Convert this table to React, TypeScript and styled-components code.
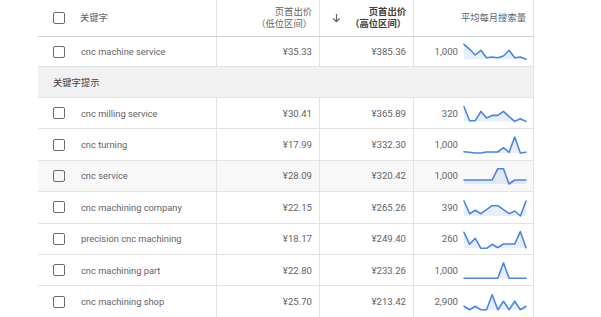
import React from "react";
import styled, { createGlobalStyle } from "styled-components";

const Global = createGlobalStyle`
  html, body { margin: 0; padding: 0; background: #fff; }
  body { font-family: Roboto, "Noto Sans CJK SC", sans-serif; }
`;

const COLS = "178px 103px 94px 120px";
const FONT = `Roboto, "Noto Sans CJK SC", sans-serif`;

const Page = styled.div`
  width: 601px;
  height: 317px;
  overflow: hidden;
  padding-left: 38px;
  box-sizing: border-box;
`;

const Table = styled.div`
  width: 496px;
  border-right: 1px solid #e3e3e3;
  box-sizing: border-box;
  font-family: ${FONT};
`;

const Row = styled.div<{ $h: number; $bg?: string; $strong?: boolean }>`
  display: grid;
  grid-template-columns: ${COLS};
  height: ${(p) => p.$h}px;
  box-sizing: border-box;
  background: ${(p) => p.$bg || "#fff"};
  border-bottom: 1px solid ${(p) => (p.$strong ? "#d2d2d2" : "#e3e3e3")};
`;

const Cell = styled.div<{ $divider?: boolean; $right?: boolean }>`
  display: flex;
  align-items: center;
  justify-content: ${(p) => (p.$right ? "flex-end" : "flex-start")};
  border-left: ${(p) => (p.$divider ? "1px solid #e3e3e3" : "none")};
  padding-right: ${(p) => (p.$right ? "7px" : "0")};
  box-sizing: border-box;
  min-width: 0;
`;

const KeywordCell = styled(Cell)`
  padding-left: 15px;
  gap: 16px;
`;

const Checkbox = styled.span`
  width: 12px;
  height: 12px;
  box-sizing: border-box;
  border: 1.5px solid #6b6b6b;
  border-radius: 2px;
  flex: none;
`;

const Keyword = styled.span`
  font-size: 9.3px;
  color: #5f6368;
  white-space: nowrap;
`;

const HeadLabel = styled.span<{ $bold?: boolean }>`
  font-size: 9.3px;
  line-height: 12.5px;
  color: ${(p) => (p.$bold ? "#3c4043" : "#5f6368")};
  font-weight: ${(p) => (p.$bold ? 700 : 400)};
  text-align: right;
  white-space: nowrap;
`;

const SortHead = styled(Cell)`
  justify-content: space-between;
  padding-left: 12px;
`;

const Value = styled.span`
  font-size: 9.6px;
  color: #5f6368;
  white-space: nowrap;
`;

const SearchCell = styled.div`
  display: grid;
  grid-template-columns: 1fr 62px;
  column-gap: 6px;
  padding-right: 7px;
  border-left: 1px solid #e3e3e3;
  align-items: center;
`;

const Volume = styled.span`
  font-size: 9.6px;
  color: #5f6368;
  text-align: right;
  white-space: nowrap;
`;

const Section = styled.div`
  height: 31px;
  box-sizing: border-box;
  background: #f1f1f1;
  border-bottom: 1px solid #e3e3e3;
  display: flex;
  align-items: center;
  padding-left: 15px;
  font-size: 9.3px;
  color: #3c4043;
`;

const Spark = styled.svg`
  display: block;
  overflow: visible;
`;

function Sparkline({ ys, h }: { ys: number[]; h: number }) {
  const w = 62;
  const step = w / (ys.length - 1);
  const pts = ys.map((y, i) => `${(i * step).toFixed(2)},${y}`);
  const base = Math.max(...ys);
  const area = `0,${base} ${pts.join(" ")} ${w},${base}`;
  return (
    <Spark width={w} height={h} viewBox={`0 0 ${w} ${h}`}>
      <polygon points={area} fill="rgba(66,133,244,0.13)" />
      <polyline
        points={pts.join(" ")}
        fill="none"
        stroke="#4a85e6"
        strokeWidth={1.6}
        strokeLinejoin="round"
        strokeLinecap="round"
      />
    </Spark>
  );
}

function ArrowDown() {
  return (
    <svg width="9" height="10" viewBox="0 0 9 10">
      <path d="M4.5 1 V8.5 M1.3 5.5 L4.5 8.7 L7.7 5.5" stroke="#5f6368" strokeWidth="1.2" fill="none" />
    </svg>
  );
}

type Item = { kw: string; low: string; high: string; vol: string; ys: number[]; bg?: string };

const flat = (v: number, n: number) => Array(n).fill(v);

const items: Item[] = [
  { kw: "cnc milling service", low: "¥30.41", high: "¥365.89", vol: "320", ys: [8.7, 22.7, 22.7, 13.4, 20, 17.4, 17.4, 13.4, 18.7, 23.4, 20.7, 23.4] },
  { kw: "cnc turning", low: "¥17.99", high: "¥332.30", vol: "1,000", ys: [21.7, 22.3, 23, 23, 22, 22, 22, 17.7, 22.3, 7, 23, 22.3] },
  { kw: "cnc service", low: "¥28.09", high: "¥320.42", vol: "1,000", ys: [...flat(19, 6), 7.7, 7.7, 23, 19, 19, 19], bg: "#f8f8f8" },
  { kw: "cnc machining company", low: "¥22.15", high: "¥265.26", vol: "390", ys: [9, 21.7, 18.3, 21.7, 17.7, 13.7, 13.7, 17.7, 21.7, 19, 24, 9] },
  { kw: "precision cnc machining", low: "¥18.17", high: "¥249.40", vol: "260", ys: [8.3, 20.3, 14.3, 24.3, 24.3, 20.3, 23.7, 20, 20, 20, 7.7, 23.7] },
  { kw: "cnc machining part", low: "¥22.80", high: "¥233.26", vol: "1,000", ys: [...flat(23.3, 7), 7.7, 23.3, 23.3, 23.3, 23.3] },
  { kw: "cnc machining shop", low: "¥25.70", high: "¥213.42", vol: "2,900", ys: [19.3, 22.7, 19.3, 22.7, 22.7, 7.7, 22.7, 14.3, 22.7, 14.3, 22.7, 19.3] },
];

const ROW_H = 31.4;

export default function App() {
  return (
    <>
      <Global />
      <Page>
        <Table>
          <Row $h={37} $strong>
            <KeywordCell>
              <Checkbox />
              <HeadLabel style={{ marginLeft: -1 }}>关键字</HeadLabel>
            </KeywordCell>
            <Cell $divider $right>
              <HeadLabel>
                页首出价
                <br />
                （低位区间）
              </HeadLabel>
            </Cell>
            <SortHead $divider $right>
              <ArrowDown />
              <HeadLabel $bold>
                页首出价
                <br />
                （高位区间）
              </HeadLabel>
            </SortHead>
            <Cell $divider $right>
              <HeadLabel>平均每月搜索量</HeadLabel>
            </Cell>
          </Row>
          <Row $h={30}>
            <KeywordCell>
              <Checkbox />
              <Keyword>cnc machine service</Keyword>
            </KeywordCell>
            <Cell $divider $right>
              <Value>¥35.33</Value>
            </Cell>
            <Cell $divider $right>
              <Value>¥385.36</Value>
            </Cell>
            <SearchCell>
              <Volume>1,000</Volume>
              <Sparkline h={29} ys={[7.3, 12.3, 18, 13.3, 20.7, 20, 20.7, 19, 13.3, 20.7, 20, 22.3]} />
            </SearchCell>
          </Row>
          <Section>关键字提示</Section>
          {items.map((it) => (
            <Row key={it.kw} $h={ROW_H} $bg={it.bg}>
              <KeywordCell>
                <Checkbox />
                <Keyword>{it.kw}</Keyword>
              </KeywordCell>
              <Cell $divider $right>
                <Value>{it.low}</Value>
              </Cell>
              <Cell $divider $right>
                <Value>{it.high}</Value>
              </Cell>
              <SearchCell>
                <Volume>{it.vol}</Volume>
                <Sparkline h={30} ys={it.ys} />
              </SearchCell>
            </Row>
          ))}
        </Table>
      </Page>
    </>
  );
}
